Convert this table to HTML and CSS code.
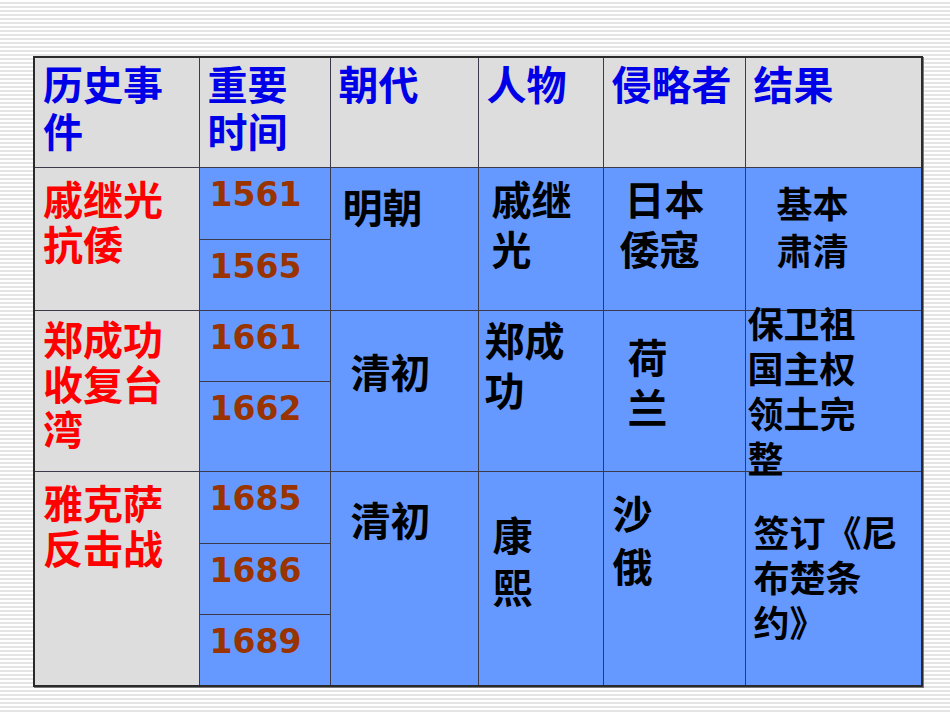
FILE: index.html
```html
<!DOCTYPE html>
<html lang="zh">
<head>
<meta charset="utf-8">
<title>历史事件</title>
<link rel="stylesheet" href="styles.css">
</head>
<body>
<div class="slide">
  <table class="grid">
    <colgroup>
      <col class="c1"><col class="c2"><col class="c3"><col class="c4"><col class="c5"><col class="c6">
    </colgroup>
    <tr class="r-head">
      <th>历史事<br>件</th>
      <th>重要<br>时间</th>
      <th>朝代</th>
      <th>人物</th>
      <th>侵略者</th>
      <th>结果</th>
    </tr>
    <tr class="r72">
      <td rowspan="2" class="event p-e1">戚继光<br>抗倭</td>
      <td class="year">1561</td>
      <td rowspan="2" class="txt dyn1">明朝</td>
      <td rowspan="2" class="txt per1">戚继<br>光</td>
      <td rowspan="2" class="txt inv1"><div class="indent">日本<br>倭寇</div></td>
      <td rowspan="2" class="txt small res1">基本<br>肃清</td>
    </tr>
    <tr class="r71">
      <td class="year">1565</td>
    </tr>
    <tr class="r71">
      <td rowspan="2" class="event p-e2">郑成功<br>收复台<br>湾</td>
      <td class="year">1661</td>
      <td rowspan="2" class="txt dyn2">清初</td>
      <td rowspan="2" class="txt per2">郑成<br>功</td>
      <td rowspan="2" class="txt inv2">荷<br>兰</td>
      <td rowspan="2" class="txt small res2"><div class="lift">保卫祖<br>国主权<br>领土完<br>整</div></td>
    </tr>
    <tr class="r90">
      <td class="year">1662</td>
    </tr>
    <tr class="r72">
      <td rowspan="3" class="event p-e3">雅克萨<br>反击战</td>
      <td class="year">1685</td>
      <td rowspan="3" class="txt dyn3">清初</td>
      <td rowspan="3" class="txt per3">康<br>熙</td>
      <td rowspan="3" class="txt inv3">沙<br>俄</td>
      <td rowspan="3" class="txt small res3">签订《尼<br>布楚条<br>约》</td>
    </tr>
    <tr class="r71">
      <td class="year">1686</td>
    </tr>
    <tr class="r72">
      <td class="year">1689</td>
    </tr>
  </table>
</div>
</body>
</html>
```

FILE: styles.css
```css
html, body {
  margin: 0;
  padding: 0;
}
body {
  width: 950px;
  height: 713px;
  overflow: hidden;
  background: repeating-linear-gradient(to bottom, #ffffff 0px, #ffffff 2px, #e4e4e4 2px, #e4e4e4 4px);
  font-family: "Noto Sans CJK SC", "DejaVu Sans", sans-serif;
}
.slide {
  padding: 56px 0 0 33px;
}
.grid {
  border-collapse: collapse;
  table-layout: fixed;
  width: 889px;
  border: 2px solid #2a2a2a;
  box-shadow: 1px 1px 0 #7a7a7a;
}
.c1 { width: 165px; }
.c2 { width: 131px; }
.c3 { width: 148px; }
.c4 { width: 125px; }
.c5 { width: 142px; }
.c6 { width: 177px; }
.grid th, .grid td {
  border: 1px solid #3a3a4a;
  vertical-align: top;
  padding: 0;
  overflow: visible;
}
.r-head { height: 110px; }
.r72 { height: 72px; }
.r71 { height: 71px; }
.r90 { height: 90px; }
.grid th {
  background: #dddddd;
  color: #0000e8;
  font-weight: 700;
  font-size: 40px;
  line-height: 47px;
  text-align: left;
  padding: 2px 0 0 8px;
}
.event {
  background: #dddddd;
  color: #ff0000;
  font-weight: 700;
  font-size: 40px;
  line-height: 45px;
  padding-left: 8px !important;
}
.p-e1 { padding-top: 8px !important; }
.p-e2 { padding-top: 5px !important; }
.p-e3 { padding-top: 8px !important; }
.year {
  background: #6699ff;
  color: #993300;
  font-family: "DejaVu Sans", "Liberation Sans", sans-serif;
  font-weight: 700;
  font-size: 33px;
  line-height: 38px;
  padding: 8px 0 0 10px !important;
}
.txt {
  background: #6699ff;
  color: #000000;
  font-weight: 700;
  font-size: 40px;
  line-height: 50px;
}
.small {
  font-size: 36px;
  line-height: 45px;
}
.dyn1 { padding: 13px 0 0 12px !important; }
.dyn2 { padding: 35px 0 0 20px !important; }
.dyn3 { padding: 22px 0 0 20px !important; }
.per1 { padding: 5px 0 0 13px !important; }
.per2 { padding: 3px 0 0 6px !important; }
.per3 { padding: 36px 0 0 14px !important; line-height: 52px; }
.inv1 { padding: 5px 0 0 16px !important; }
.indent { text-indent: 5px; }
.inv2 { padding: 20px 0 0 24px !important; }
.inv3 { padding: 14px 0 0 9px !important; line-height: 53px; }
.res1 { padding: 11px 0 0 31px !important; line-height: 47px; }
.res2 { padding: 0 0 0 2px !important; }
.lift { margin-top: -11px; height: 150px; }
.res3 { padding: 37px 0 0 8px !important; }
```
